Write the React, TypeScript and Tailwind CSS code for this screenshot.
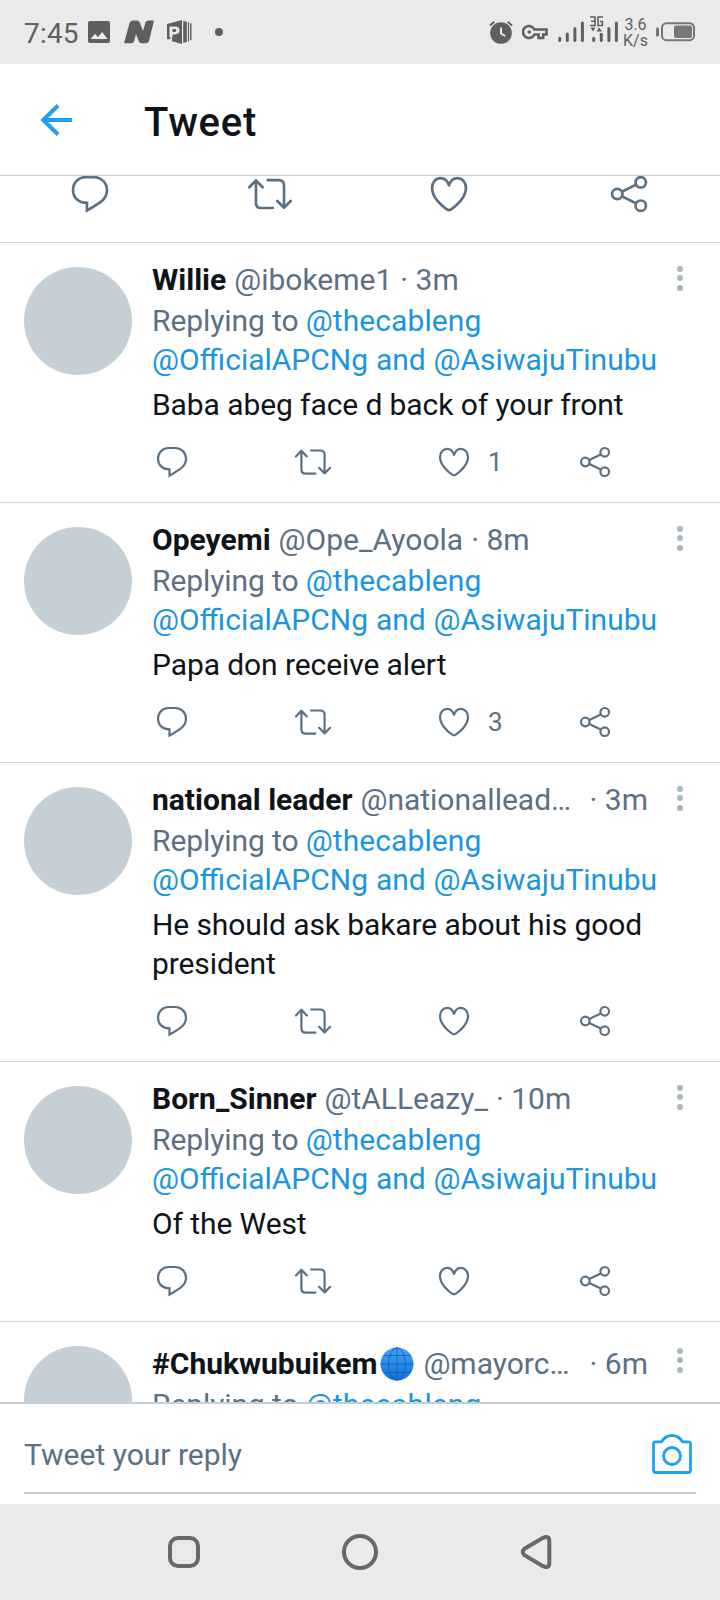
import type { ReactNode } from "react";

type Tweet = {
  name: string;
  handle: string;
  time: string;
  text?: string;
  likes?: number;
  truncated?: boolean;
  globe?: boolean;
};

const tweets: Tweet[] = [
  { name: "Willie", handle: "@ibokeme1", time: "3m", text: "Baba abeg face d back of your front", likes: 1 },
  { name: "Opeyemi", handle: "@Ope_Ayoola", time: "8m", text: "Papa don receive alert", likes: 3 },
  { name: "national leader", handle: "@nationallead…", time: "3m", text: "He should ask bakare about his good president", truncated: true },
  { name: "Born_Sinner", handle: "@tALLeazy_", time: "10m", text: "Of the West" },
  { name: "#Chukwubuikem", handle: "@mayorc…", time: "6m", truncated: true, globe: true },
];

function Icon({ big, children }: { big?: boolean; children: ReactNode }) {
  return (
    <svg
      viewBox="0 0 38 38"
      className={big ? "size-[46px] shrink-0" : "size-[38px] shrink-0"}
      fill="none"
      stroke="#5b7083"
      strokeWidth="2.2"
      strokeLinecap="round"
      strokeLinejoin="round"
    >
      {children}
    </svg>
  );
}

function ReplyIcon({ big }: { big?: boolean }) {
  return (
    <Icon big={big}>
      <path strokeLinejoin="miter" d="M15.5 5H22C28.5 5 33 9.8 33 15.8C33 20 31 23.3 27.3 25.9C24 28.2 20.5 30.5 16.5 32.6V26.3C9.5 26.3 5 22 5 15.8C5 9.8 9.3 5 15.5 5Z" />
    </Icon>
  );
}

function RetweetIcon({ big }: { big?: boolean }) {
  return (
    <Icon big={big}>
      <path d="M1.9 13.4L7.4 7.7L12.9 13.4M7.4 8V26.2Q7.4 30.6 11.8 30.6H21.4M17 7.5H26.2Q30.6 7.5 30.6 11.9V30M25.1 24.8L30.6 30.4L36.1 24.8" />
    </Icon>
  );
}

function HeartIcon({ big }: { big?: boolean }) {
  return (
    <Icon big={big}>
      <path d="M19 11.8C17.7 8 15 5.9 12.2 5.9C8.1 5.9 5 9.2 5 14C5 21.5 12.5 28.6 17.2 31.7Q19 32.9 20.8 31.7C25.5 28.6 33 21.5 33 14C33 9.2 29.9 5.9 25.8 5.9C23 5.9 20.3 8 19 11.8Z" />
    </Icon>
  );
}

function ShareIcon({ big }: { big?: boolean }) {
  return (
    <Icon big={big}>
      <circle cx="9.3" cy="19" r="4.3" />
      <circle cx="28.7" cy="9.3" r="4.3" />
      <circle cx="28.7" cy="28.7" r="4.3" />
      <path d="M13.3 17L24.7 11.4M13.3 21L24.7 26.6" />
    </Icon>
  );
}

function Globe() {
  return (
    <svg viewBox="0 0 34 34" className="ml-[3px] size-[34px] shrink-0">
      <defs>
        <linearGradient id="globe" x1="0" y1="0" x2="0" y2="1">
          <stop offset="0" stopColor="#42a5f5" />
          <stop offset="1" stopColor="#1270d4" />
        </linearGradient>
      </defs>
      <circle cx="17" cy="17" r="16.5" fill="url(#globe)" />
      <g fill="none" stroke="#1263bd" strokeWidth="1">
        <path d="M17 .5V33.5M.5 17H33.5M3.5 8.5H30.5M3.5 25.5H30.5" />
        <ellipse cx="17" cy="17" rx="8.5" ry="16.2" />
      </g>
    </svg>
  );
}

function Signal() {
  return (
    <svg viewBox="0 0 26 22" className="h-[22px] w-[26px]" stroke="#5f5f5f" strokeWidth="3" strokeLinecap="round">
      <path d="M1.7 17.2V19.5M9.3 13V19.5M16.9 7.5V19.5M24.4 2V19.5" />
    </svg>
  );
}

function StatusBar() {
  return (
    <div className="flex h-16 shrink-0 items-center bg-[#eaeaea] pl-6 text-[#5f5f5f]">
      <span className="mt-[3px] w-[63px] text-[28px] leading-8 tracking-[0.2px]">7:45</span>
      <svg viewBox="0 0 24 24" className="size-6" fill="#5f5f5f">
        <path fillRule="evenodd" d="M3 1H21Q23 1 23 3V21Q23 23 21 23H3Q1 23 1 21V3Q1 1 3 1ZM3.5 19H20.5L15.2 12L11 17L8 13.7Z" />
      </svg>
      <svg viewBox="0 0 30 24" className="ml-[13px] h-6 w-[30px]" fill="#5f5f5f">
        <path d="M0 23.3L5.5 3Q6.2 .5 8.5 .5H13Q15 .5 15.8 2.5L19 11L21.5 2.5Q22.2 .5 24.3 .5H30L25 21Q24.3 23.3 22 23.3H17.5Q15.5 23.3 14.8 21.3L12 14L10 21.5Q9.5 23.3 7.5 23.3Z" />
      </svg>
      <svg viewBox="0 0 26 26" className="ml-3 size-[26px]" fill="#5f5f5f">
        <path fillRule="evenodd" d="M1 5L16 1V25L6 22.3V18.5L2.8 20.5L1 20ZM3.5 7.5V18.5H6.5V15.5H9Q13.5 15 13.5 11.2Q13.5 7.5 9 7.5ZM6.5 10H8.6Q10.3 10 10.3 11.4Q10.3 13 8.6 13H6.5Z" />
        <path d="M17.2 2L20.8 2.8V23L17.2 23.8ZM21.9 3.1L23.1 3.6V22.2L21.9 22.7ZM24.1 4L25.5 4.5V21L24.1 21.6Z" />
      </svg>
      <span className="ml-[23px] size-2 rounded-full bg-[#5f5f5f]" />
      <div className="ml-auto flex items-center pr-[25px]">
        <svg viewBox="0 0 24 24" className="size-6" fill="none" stroke="#5f5f5f" strokeWidth="2">
          <circle cx="12" cy="13" r="9.8" fill="#5f5f5f" />
          <path d="M1 5.5L5.3 1.7M18.7 1.7L23 5.5" />
          <path d="M12 7.5V13.5L16.2 16" stroke="#eaeaea" />
        </svg>
        <svg viewBox="0 0 26 16" className="ml-[9px] h-4 w-[26px]" fill="none" stroke="#5f5f5f" strokeWidth="2.6">
          <path d="M12.4 5.5A6 6 0 1 0 12.4 10.5H16.6V14H21.2V10.5H24.5V5.5Z" />
          <circle cx="7.3" cy="8" r="1.8" fill="#5f5f5f" stroke="none" />
        </svg>
        <div className="ml-[10px] flex">
          <Signal />
        </div>
        <div className="relative ml-2">
          <Signal />
          <svg viewBox="0 0 14 17" className="absolute -top-[5px] -left-0.5 h-[17px] w-[14px] bg-[#eaeaea]" fill="none" stroke="#5f5f5f" strokeWidth="1.6">
            <path d="M0 1H5V9.5H0M1 5.2H5M13 1H8V9.5H12.4V5.5H10" />
            <path d="M.5 11.5H5.5L3 15.5ZM6.5 15.5H12L9.2 11.5Z" fill="#5f5f5f" stroke="none" />
          </svg>
        </div>
        <div className="mt-0.5 ml-[5px] flex w-[25px] flex-col items-center text-[16px] leading-4">
          <span>3.6</span>
          <span>K/s</span>
        </div>
        <svg viewBox="0 0 40 20" className="ml-[7px] h-5 w-10" fill="none">
          <rect x="1" y="5.5" width="3" height="9" rx="1" fill="#777" />
          <rect x="7" y="1.2" width="32" height="17" rx="4.5" stroke="#777" strokeWidth="2" />
          <rect x="19" y="3.5" width="18" height="12.5" rx="2" fill="#777" />
        </svg>
      </div>
    </div>
  );
}

function TweetActions({ likes }: { likes?: number }) {
  return (
    <div className="mt-[19px] mb-[21px] ml-px grid grid-cols-[141px_141px_141px_88px]">
      <ReplyIcon />
      <RetweetIcon />
      <div className="flex items-center">
        <HeartIcon />
        {likes ? <span className="ml-[15px] text-[26px] leading-[38px] text-[#5b7083]">{likes}</span> : null}
      </div>
      <ShareIcon />
    </div>
  );
}

function TweetRow({ tweet }: { tweet: Tweet }) {
  return (
    <article className="flex shrink-0 border-b border-[#c4cfd6] pl-6">
      <div className="mt-6 size-[108px] shrink-0 rounded-full bg-[#c4cfd6]" />
      <div className={tweet.globe ? "ml-5 w-[512px] pt-[22px]" : "ml-5 w-[512px] pt-[17px]"}>
        <div className="flex w-[496px] items-center leading-[39px] whitespace-nowrap text-[#5b7083]">
          <span className="font-bold text-[#0f1419]">{tweet.name}</span>
          {tweet.globe ? <Globe /> : null}
          <span className={tweet.globe ? "ml-[9px]" : "ml-2"}>{tweet.handle}</span>
          <span className={tweet.truncated ? "ml-auto" : "ml-2"}>· {tweet.time}</span>
        </div>
        <p className="mt-0.5 leading-[39px] text-[#5b7083]">
          <span className="tracking-[-0.1px]">Replying to </span>
          <span className="tracking-[0.08px] text-[#1b95e0]">@thecableng</span>
        </p>
        {tweet.text ? (
          <>
            <p className="leading-[39px] text-[#1b95e0] [word-spacing:0.4px]">@OfficialAPCNg and @AsiwajuTinubu</p>
            <p className="mt-1.5 leading-[39px] tracking-[-0.09px] text-[#0f1419]">{tweet.text}</p>
            <TweetActions likes={tweet.likes} />
          </>
        ) : null}
      </div>
      <div className={tweet.globe ? "mt-[26px] ml-[13px] flex flex-col gap-[3.4px]" : "mt-[23px] ml-[13px] flex flex-col gap-[3.4px]"}>
        <span className="size-1.5 rounded-full bg-[#aab8c2]" />
        <span className="size-1.5 rounded-full bg-[#aab8c2]" />
        <span className="size-1.5 rounded-full bg-[#aab8c2]" />
      </div>
    </article>
  );
}

export default function App() {
  return (
    <div className="flex h-[1600px] w-[720px] flex-col overflow-hidden bg-white font-[Roboto,sans-serif] text-[30px]">
      <StatusBar />

      <header className="flex h-28 shrink-0 items-center border-b border-[#c4cfd6] pl-10">
        <svg viewBox="0 0 32 32" className="size-8" fill="none" stroke="#1da1f2" strokeWidth="4">
          <path d="M32 16H3M18 1.5L3.3 16L18 30.5" />
        </svg>
        <h1 className="mt-1.5 ml-[72px] text-[40px] leading-[48px] font-medium tracking-[0.8px] text-[#0f1419]">Tweet</h1>
      </header>

      <main className="flex min-h-0 flex-1 flex-col overflow-hidden">
        <div className="-mt-[5px] grid h-[72px] shrink-0 grid-cols-4 justify-items-center border-b border-[#c4cfd6] pr-px">
          <ReplyIcon big />
          <RetweetIcon big />
          <HeartIcon big />
          <ShareIcon big />
        </div>
        {tweets.map((tweet) => (
          <TweetRow key={tweet.name} tweet={tweet} />
        ))}
      </main>

      <footer className="h-[102px] shrink-0 border-t-2 border-[#c4cfd6] px-6">
        <div className="flex h-[90px] items-center justify-between border-b-2 border-[#c4cfd6] pt-[13px] pr-1">
          <span className="text-[#5b7083]">Tweet your reply</span>
          <svg viewBox="0 0 40 40" className="mb-px size-10" fill="none" stroke="#1da1f2" strokeWidth="2.8" strokeLinejoin="round">
            <path d="M1.5 10Q1.5 7.8 3.7 7.8H9.5C12 3.5 15.5 1.5 20 1.5S28 3.5 30.5 7.8H36.3Q38.5 7.8 38.5 10V36.3Q38.5 38.5 36.3 38.5H3.7Q1.5 38.5 1.5 36.3Z" />
            <circle cx="20" cy="22" r="8.5" />
          </svg>
        </div>
      </footer>

      <nav className="flex h-24 shrink-0 items-center bg-[#eaeaea] pl-[168px]">
        <span className="size-8 rounded-[10px] border-4 border-[#686868]" />
        <span className="ml-[142px] size-9 rounded-full border-4 border-[#686868]" />
        <svg viewBox="0 0 32 36" className="ml-[142px] h-9 w-8" fill="none" stroke="#686868" strokeWidth="4">
          <path d="M4.5 14.8L23 3.8Q29.3 1 29.3 7V29Q29.3 35 23 32.2L4.5 21.2Q1 18 4.5 14.8Z" />
        </svg>
      </nav>
    </div>
  );
}
